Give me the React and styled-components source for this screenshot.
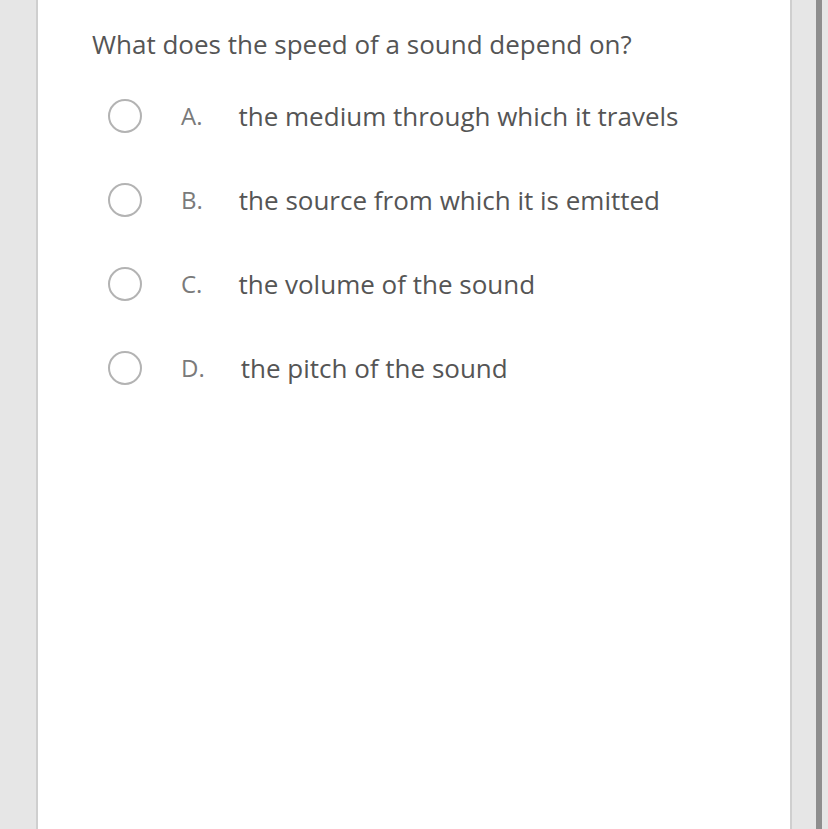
import React from "react";
import styled, { createGlobalStyle } from "styled-components";

const GlobalStyle = createGlobalStyle`
  html, body {
    margin: 0;
    padding: 0;
    height: 100%;
    background: #e6e6e6;
    overflow: hidden;
  }
  #root {
    height: 100%;
  }
`;

const Page = styled.div`
  display: flex;
  height: 829px;
  padding-left: 36px;
  box-sizing: border-box;
`;

const Card = styled.div`
  width: 756px;
  background: #ffffff;
  border-left: 2px solid #cfcfcf;
  border-right: 2px solid #cfcfcf;
  padding: 26px 0 0 54px;
  box-sizing: border-box;
  font-family: "Open Sans", "Noto Sans", sans-serif;
`;

const ScrollTrack = styled.div`
  width: 36px;
  display: flex;
  justify-content: flex-end;
`;

const ScrollBar = styled.div`
  width: 6px;
  margin-right: 6px;
  background: #8e8e8e;
`;

const Question = styled.div`
  font-size: 26px;
  line-height: 36px;
  color: #555555;
  margin-bottom: 37px;
`;

const Options = styled.div`
  display: flex;
  flex-direction: column;
  gap: 50px;
  padding-left: 16px;
`;

const Option = styled.label`
  display: flex;
  align-items: center;
  height: 34px;
`;

const Radio = styled.span`
  width: 34px;
  height: 34px;
  border-radius: 50%;
  border: 2px solid #b3b3b3;
  box-sizing: border-box;
  flex-shrink: 0;
  margin-right: 39px;
`;

const Letter = styled.span`
  font-size: 24px;
  line-height: 34px;
  color: #7a7a7a;
  margin-right: 36px;
`;

const Answer = styled.span`
  font-size: 26px;
  line-height: 34px;
  color: #555555;
`;

const answers = [
  ["A.", "the medium through which it travels"],
  ["B.", "the source from which it is emitted"],
  ["C.", "the volume of the sound"],
  ["D.", "the pitch of the sound"],
];

export default function App() {
  return (
    <>
      <GlobalStyle />
      <Page>
        <Card>
          <Question>What does the speed of a sound depend on?</Question>
          <Options>
            {answers.map(([letter, text]) => (
              <Option key={letter}>
                <Radio />
                <Letter>{letter}</Letter>
                <Answer>{text}</Answer>
              </Option>
            ))}
          </Options>
        </Card>
        <ScrollTrack>
          <ScrollBar />
        </ScrollTrack>
      </Page>
    </>
  );
}
